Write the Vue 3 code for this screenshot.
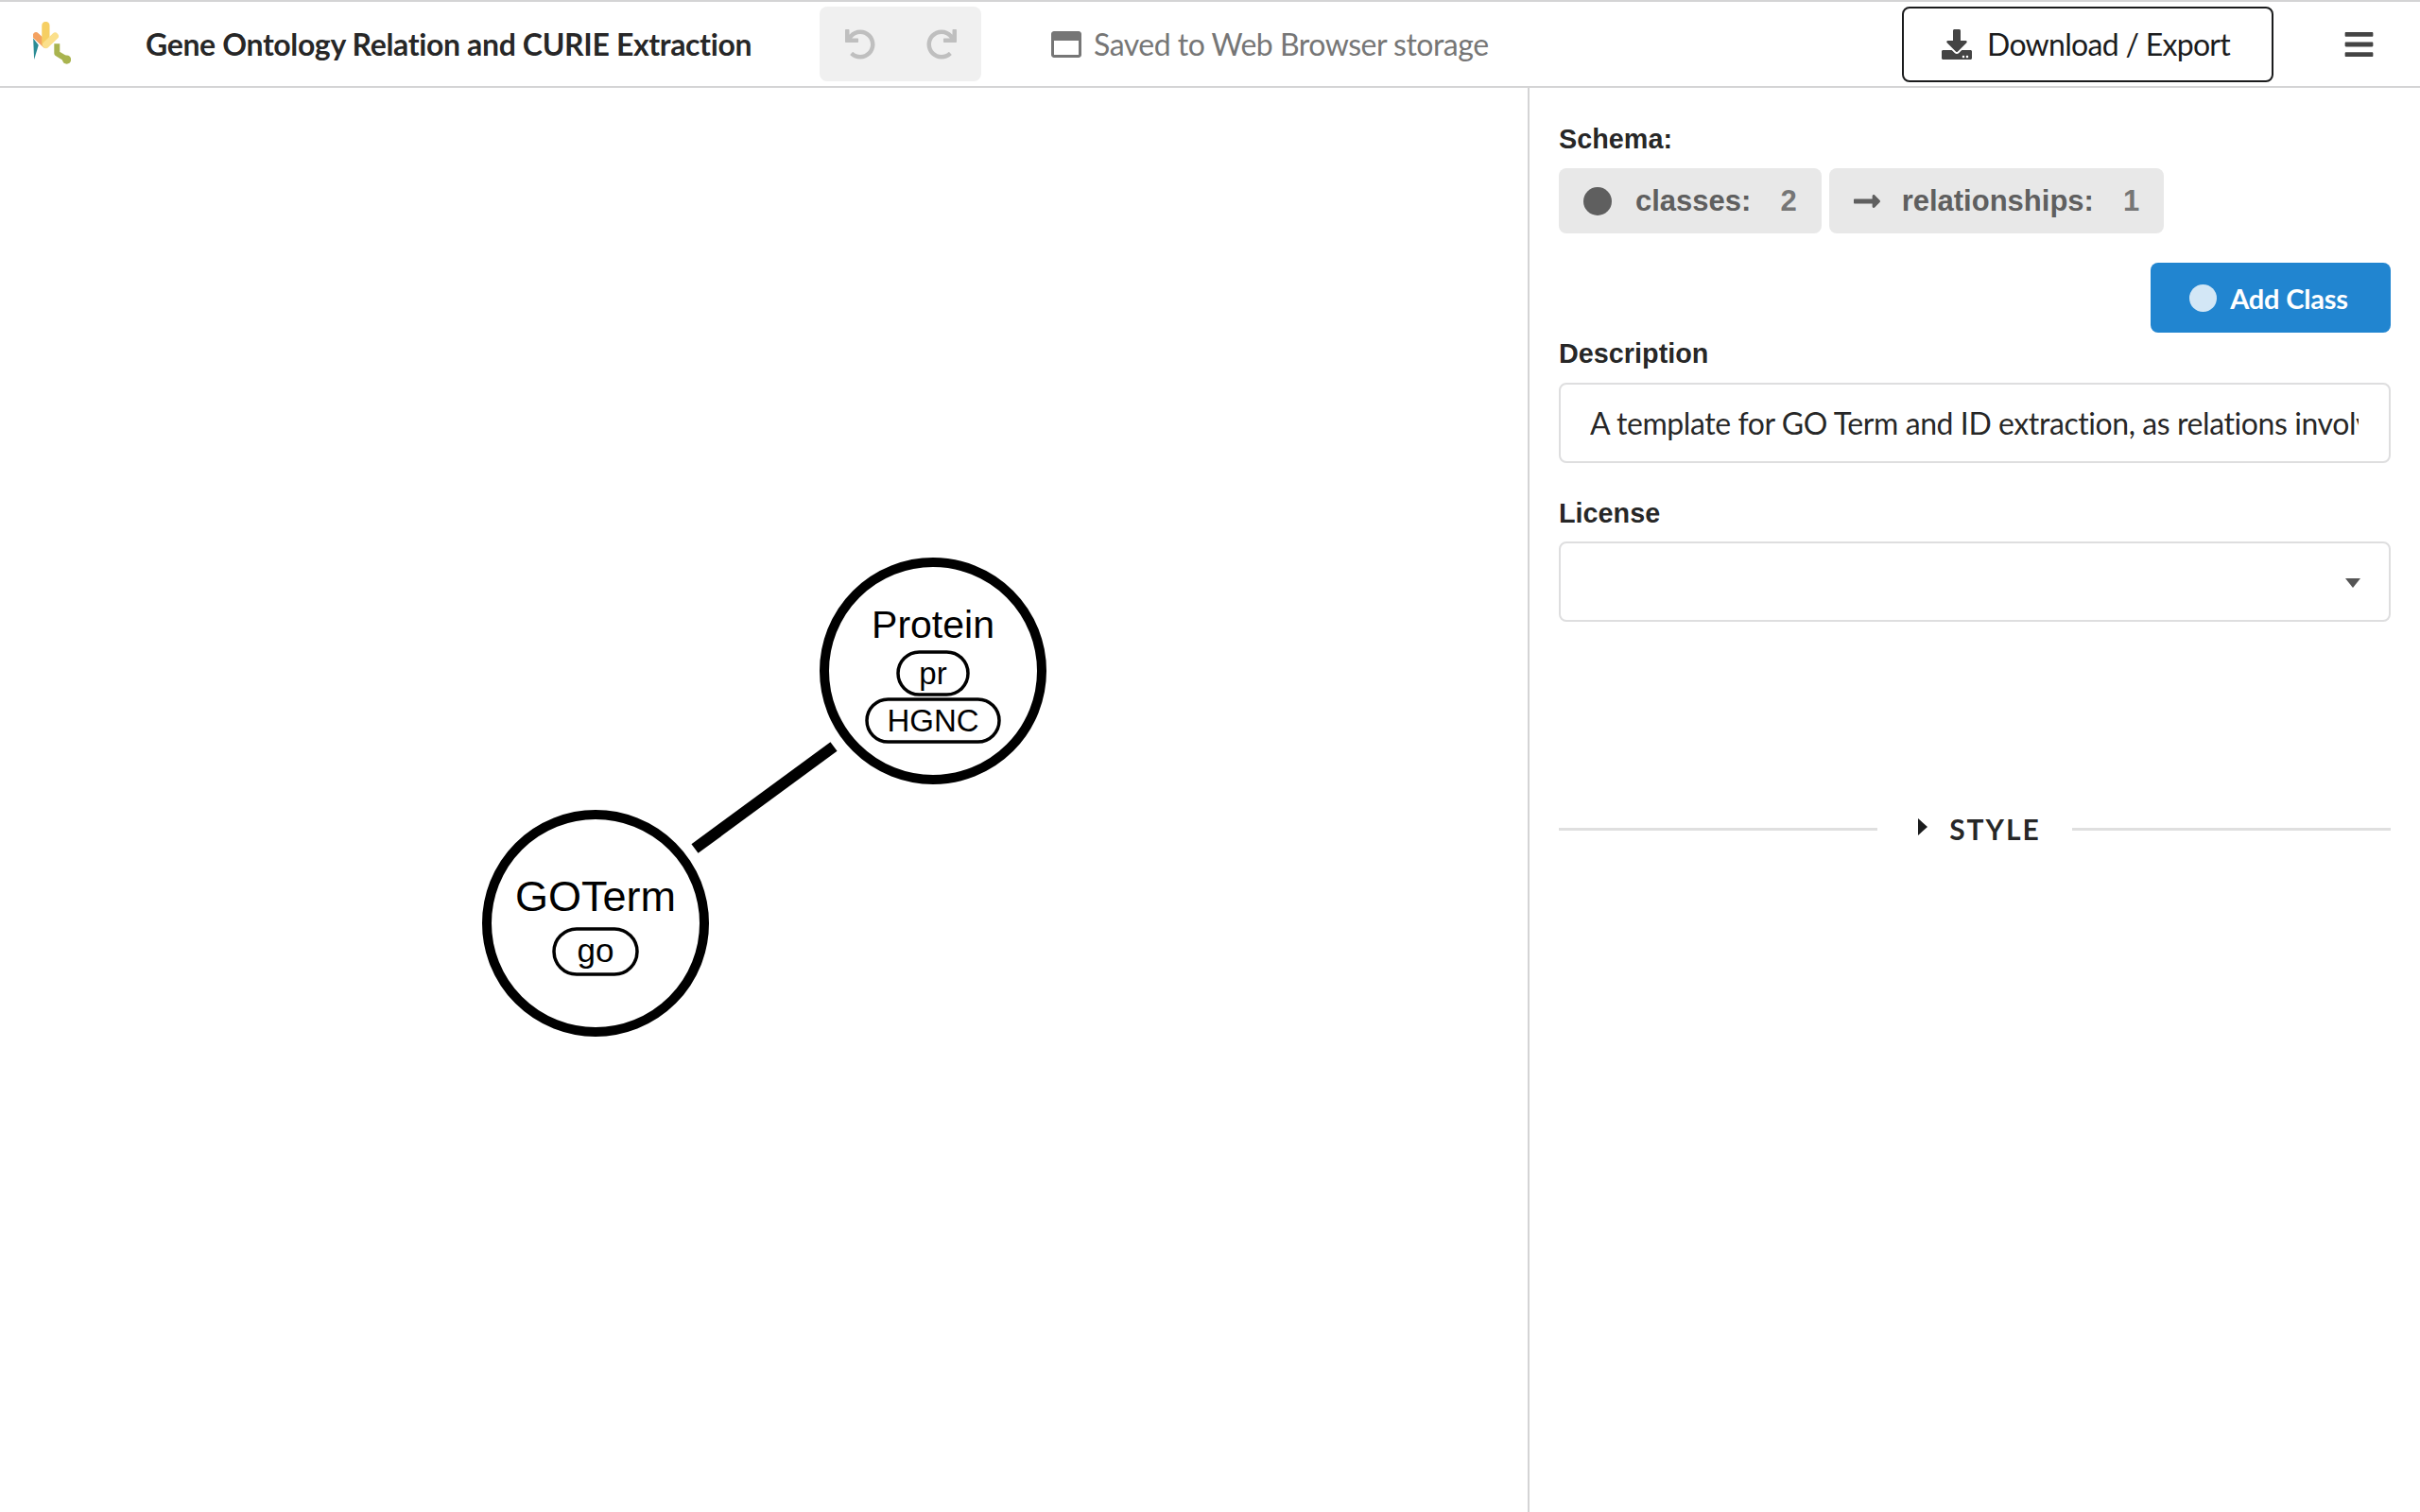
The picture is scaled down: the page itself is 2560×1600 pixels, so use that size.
<template>
  <div class="app">
    <header class="topbar">
      <svg class="logo" viewBox="45 42 120 136" width="40" height="45">
        <path d="M45 95 L62 117 L48 163 Z" fill="#2b8c95" />
        <path d="M121 112 V143 L150 161" fill="none" stroke="#a9b44f" stroke-width="18" stroke-linejoin="round" />
        <circle cx="152" cy="163" r="14" fill="#a9b44f" />
        <path d="M54 87 L84 115" fill="none" stroke="#f4a261" stroke-width="22" stroke-linecap="round" />
        <path d="M85 54 V112" fill="none" stroke="#f6cf63" stroke-width="25" stroke-linecap="round" />
        <path d="M115 88 L86 116" fill="none" stroke="#fbe08c" stroke-width="22" stroke-linecap="round" />
      </svg>
      <div class="title">Gene Ontology Relation and CURIE Extraction</div>
      <div class="history">
        <svg class="hist-icon" viewBox="0 0 512 512"><path :d="undoPath" /></svg>
        <svg class="hist-icon flip" viewBox="0 0 512 512"><path :d="undoPath" /></svg>
      </div>
      <div class="saved">
        <svg class="saved-icon" viewBox="0 0 512 512">
          <path d="M464 32H48C21.5 32 0 53.5 0 80v352c0 26.5 21.5 48 48 48h416c26.5 0 48-21.5 48-48V80c0-26.5-21.5-48-48-48zm0 394c0 3.3-2.7 6-6 6H54c-3.3 0-6-2.7-6-6V192h416v234z" />
        </svg>
        <span>Saved to Web Browser storage</span>
      </div>
      <button class="export">
        <svg class="export-icon" viewBox="0 0 512 512">
          <path d="M216 0h80c13.3 0 24 10.7 24 24v168h87.7c17.8 0 26.7 21.5 14.1 34.1L269.7 378.3c-7.5 7.5-19.8 7.5-27.3 0L90.1 226.1c-12.6-12.6-3.7-34.1 14.1-34.1H192V24c0-13.3 10.7-24 24-24zm296 376v112c0 13.3-10.7 24-24 24H24c-13.3 0-24-10.7-24-24V376c0-13.3 10.7-24 24-24h146.7l49 49c20.1 20.1 52.5 20.1 72.6 0l49-49H488c13.3 0 24 10.7 24 24zm-124 88c0-11-9-20-20-20s-20 9-20 20 9 20 20 20 20-9 20-20zm64 0c0-11-9-20-20-20s-20 9-20 20 9 20 20 20 20-9 20-20z" />
        </svg>
        Download / Export
      </button>
      <svg class="menu" viewBox="0 0 448 512">
        <path d="M16 132h416c8.837 0 16-7.163 16-16V76c0-8.837-7.163-16-16-16H16C7.163 60 0 67.163 0 76v40c0 8.837 7.163 16 16 16zm0 160h416c8.837 0 16-7.163 16-16v-40c0-8.837-7.163-16-16-16H16c-8.837 0-16 7.163-16 16v40c0 8.837 7.163 16 16 16zm0 160h416c8.837 0 16-7.163 16-16v-40c0-8.837-7.163-16-16-16H16c-8.837 0-16 7.163-16 16v40c0 8.837 7.163 16 16 16z" />
      </svg>
    </header>

    <div class="body">
      <main class="canvas">
        <svg class="graph" width="1616" height="1507" viewBox="0 93 1616 1507">
          <line x1="735" y1="898" x2="882" y2="790" stroke="#000" stroke-width="12" />
          <g v-for="node in nodes" :key="node.name">
            <circle :cx="node.x" :cy="node.y" r="115" fill="#fff" stroke="#000" stroke-width="10" />
            <text :x="node.x" :y="node.labelY" :font-size="node.labelSize" class="node-label">{{ node.name }}</text>
            <g v-for="tag in node.tags" :key="tag.text">
              <rect
                :x="node.x - tag.w / 2"
                :y="tag.y"
                :width="tag.w"
                :height="tag.h"
                :rx="tag.h / 2"
                fill="#fff"
                stroke="#000"
                stroke-width="3.5"
              />
              <text :x="node.x" :y="tag.y + tag.h / 2 + 11" :font-size="tag.size" class="node-tag">{{ tag.text }}</text>
            </g>
          </g>
        </svg>
      </main>

      <aside class="panel">
        <div class="field-label schema-label">Schema:</div>
        <div class="chips">
          <div class="chip">
            <span class="dot"></span>
            <span class="chip-name">classes:</span>
            <span class="chip-num">2</span>
          </div>
          <div class="chip">
            <svg class="arrow" viewBox="0 0 448 512">
              <path d="M313.941 216H12c-6.627 0-12 5.373-12 12v56c0 6.627 5.373 12 12 12h301.941v46.059c0 21.382 25.851 32.09 40.971 16.971l86.059-86.059c9.373-9.373 9.373-24.569 0-33.941l-86.059-86.059c-15.119-15.119-40.971-4.411-40.971 16.971V216z" />
            </svg>
            <span class="chip-name">relationships:</span>
            <span class="chip-num">1</span>
          </div>
        </div>
        <div class="add-row">
          <button class="add-class"><span class="add-dot"></span>Add Class</button>
        </div>

        <label class="field-label desc-label">Description</label>
        <input class="text-input" type="text" readonly :value="description" />

        <label class="field-label license-label">License</label>
        <div class="select"><span class="select-caret"></span></div>

        <div class="divider">
          <div class="rule"></div>
          <div class="divider-text"><span class="caret-right"></span>STYLE</div>
          <div class="rule"></div>
        </div>
      </aside>
    </div>
  </div>
</template>

<script setup>
const undoPath =
  'M212.333 224.333H12c-6.627 0-12-5.373-12-12V12C0 5.373 5.373 0 12 0h48c6.627 0 12 5.373 12 12v78.112C117.773 39.279 184.26 7.47 258.175 8.007c136.906.994 246.448 111.623 246.157 248.532C504.041 393.258 393.12 504 256.333 504c-64.089 0-122.496-24.313-166.51-64.215-5.099-4.622-5.334-12.554-.467-17.42l33.967-33.967c4.474-4.474 11.662-4.717 16.401-.525C170.76 415.336 211.58 432 256.333 432c97.268 0 176-78.716 176-176 0-97.267-78.716-176-176-176-58.496 0-110.28 28.476-142.274 72.333h98.274c6.627 0 12 5.373 12 12v48c0 6.627-5.373 12-12 12z'

const description = 'A template for GO Term and ID extraction, as relations involving proteins'

const nodes = [
  {
    name: 'Protein',
    x: 987,
    y: 710,
    labelY: 675,
    labelSize: 41,
    tags: [
      { text: 'pr', y: 690, w: 74, h: 45, size: 33 },
      { text: 'HGNC', y: 740, w: 140, h: 45, size: 33 }
    ]
  },
  {
    name: 'GOTerm',
    x: 630,
    y: 977,
    labelY: 964,
    labelSize: 45,
    tags: [{ text: 'go', y: 983, w: 88, h: 48, size: 35 }]
  }
]
</script>

<style scoped>
.app {
  width: 2560px;
  height: 1600px;
  display: flex;
  flex-direction: column;
  background: #fff;
  font-family: Lato, "Liberation Sans", sans-serif;
  color: rgba(0, 0, 0, 0.87);
  overflow: hidden;
}

.topbar {
  box-sizing: border-box;
  height: 93px;
  flex-shrink: 0;
  display: flex;
  align-items: center;
  border-top: 2px solid #d4d4d5;
  border-bottom: 2px solid #d4d4d5;
}

.logo {
  margin-left: 35px;
  margin-top: -2px;
  flex-shrink: 0;
}

.title {
  margin-left: 79px;
  width: 642px;
  font-size: 32px;
  font-weight: 700;
  letter-spacing: -0.36px;
  white-space: nowrap;
}

.history {
  box-sizing: border-box;
  margin-left: 71px;
  width: 171px;
  height: 79px;
  display: flex;
  align-items: center;
  justify-content: center;
  gap: 54px;
  background: #f0f0f0;
  border-radius: 8px;
}

.hist-icon {
  width: 32px;
  height: 32px;
  fill: #bfbfbf;
}

.flip {
  transform: scaleX(-1);
}

.saved {
  margin-left: 74px;
  display: flex;
  align-items: center;
  gap: 13px;
  font-size: 32px;
  letter-spacing: -0.5px;
  color: #767676;
}

.saved-icon {
  width: 32px;
  height: 32px;
  fill: #767676;
}

.export {
  box-sizing: border-box;
  margin-left: auto;
  width: 393px;
  height: 80px;
  display: flex;
  align-items: center;
  justify-content: flex-start;
  gap: 16px;
  padding-left: 40px;
  background: #fff;
  border: 2px solid #1b1c1d;
  border-radius: 8px;
  font-family: Lato, "Liberation Sans", sans-serif;
  font-size: 32px;
  letter-spacing: -0.7px;
  color: #1b1c1d;
}

.export-icon {
  width: 32px;
  height: 32px;
  fill: #444;
}

.menu {
  width: 31px;
  height: 34px;
  margin-left: 75px;
  margin-right: 49px;
  fill: #444;
}

.body {
  flex: 1;
  display: flex;
  min-height: 0;
}

.canvas {
  flex: 1;
  min-width: 0;
}

.graph {
  display: block;
}

.node-label {
  font-family: "Liberation Sans", sans-serif;
  text-anchor: middle;
  fill: #000;
}

.node-tag {
  font-family: "Liberation Sans", sans-serif;
  text-anchor: middle;
  fill: #000;
}

.panel {
  box-sizing: border-box;
  width: 944px;
  flex-shrink: 0;
  display: flex;
  flex-direction: column;
  padding: 37px 31px 0 31px;
  border-left: 2px solid #d4d4d5;
}

.field-label {
  display: block;
  font-family: "Liberation Sans", sans-serif;
  font-weight: 700;
  font-size: 28.8px;
  line-height: 34px;
  color: rgba(0, 0, 0, 0.87);
}

.chips {
  margin-top: 14px;
  display: flex;
  gap: 8px;
}

.chip {
  box-sizing: border-box;
  height: 69px;
  display: flex;
  align-items: center;
  padding: 0 26px;
  background: #e8e8e8;
  border-radius: 8px;
  font-family: "Liberation Sans", sans-serif;
  font-size: 31px;
  font-weight: 700;
  color: #6e6e6e;
}

.dot {
  width: 30px;
  height: 30px;
  border-radius: 50%;
  background: #5f5f5f;
  margin-right: 25px;
}

.arrow {
  width: 28px;
  height: 32px;
  fill: #5f5f5f;
  margin-right: 23px;
}

.chip-name {
  color: #5f5f5f;
}

.chip-num {
  margin-left: 31px;
  color: #767676;
}

.add-row {
  margin-top: 31px;
  display: flex;
  justify-content: flex-end;
}

.add-class {
  box-sizing: border-box;
  width: 254px;
  height: 74px;
  display: flex;
  align-items: center;
  justify-content: center;
  gap: 14px;
  padding: 0 4px 0 0;
  background: #2185d0;
  border: none;
  border-radius: 8px;
  font-family: Lato, "Liberation Sans", sans-serif;
  font-size: 29px;
  font-weight: 700;
  letter-spacing: -0.2px;
  color: #fff;
}

.add-dot {
  width: 29px;
  height: 29px;
  border-radius: 50%;
  background: #d3e7f6;
}

.desc-label {
  margin-top: 5px;
}

.license-label {
  margin-top: 36px;
}

.text-input {
  box-sizing: border-box;
  display: block;
  width: 100%;
  height: 85px;
  margin-top: 14px;
  padding: 0 32px 0 31px;
  background: #fff;
  border: 2px solid #dededf;
  border-radius: 8px;
  outline: none;
  font-family: Lato, "Liberation Sans", sans-serif;
  font-size: 32px;
  letter-spacing: -0.42px;
  color: rgba(0, 0, 0, 0.87);
}

.select {
  box-sizing: border-box;
  width: 100%;
  height: 85px;
  margin-top: 13px;
  display: flex;
  align-items: center;
  justify-content: flex-end;
  padding-right: 30px;
  background: #fff;
  border: 2px solid #dededf;
  border-radius: 8px;
}

.select-caret {
  width: 0;
  height: 0;
  margin-top: 2px;
  border-left: 8px solid transparent;
  border-right: 8px solid transparent;
  border-top: 10px solid #555;
}

.divider {
  margin-top: 201px;
  display: flex;
  align-items: center;
}

.rule {
  flex: 1;
  height: 3px;
  background: #dfdfdf;
}

.divider-text {
  box-sizing: border-box;
  width: 206px;
  flex-shrink: 0;
  display: flex;
  align-items: center;
  justify-content: center;
  padding-left: 10px;
  font-size: 30px;
  font-weight: 700;
  letter-spacing: 2px;
  color: rgba(0, 0, 0, 0.87);
}

.caret-right {
  width: 0;
  height: 0;
  margin-right: 23px;
  border-top: 9px solid transparent;
  border-bottom: 9px solid transparent;
  border-left: 10px solid #1b1c1d;
  margin-top: -4px;
}
</style>
